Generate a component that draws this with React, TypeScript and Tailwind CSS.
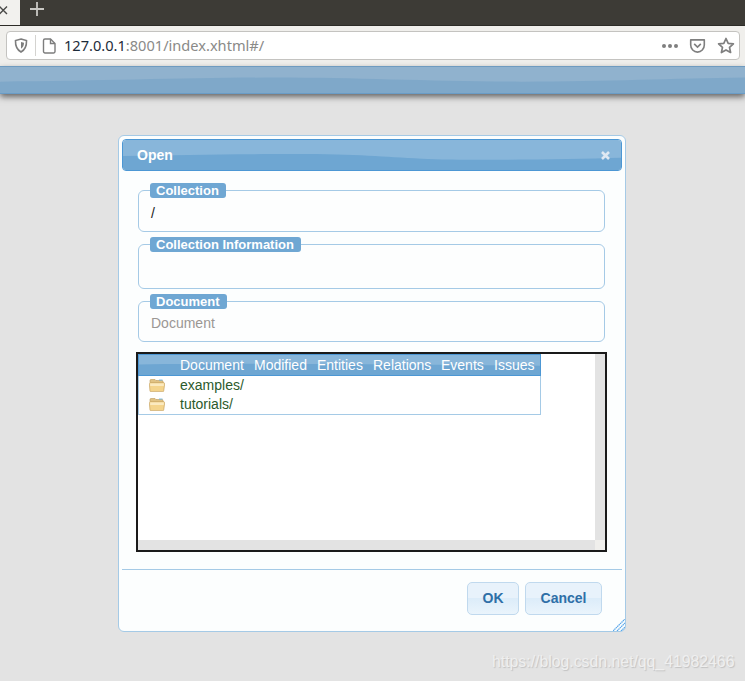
import React from "react";

const sans = { fontFamily: '"Liberation Sans", Arial, sans-serif' };

function Wave({ top, path, color }: { top: string; path: string; color: string }) {
  return (
    <svg className="absolute inset-0 w-full h-full" viewBox="0 0 500 32" preserveAspectRatio="none" aria-hidden>
      <rect width="500" height="32" fill={top} />
      <path d={path} fill={color} />
    </svg>
  );
}

function Field({ legend, h, mt, children, legendW }: { legend: string; h: string; mt: string; legendW: string; children?: React.ReactNode }) {
  return (
    <div className={`relative ${h} ${mt} border border-[#a5cae6] rounded-[6px] bg-[#fdfefe]`}>
      <div className={`absolute left-[11px] top-[-8px] h-[15px] ${legendW} bg-[#6fa7d3] rounded-[3px] text-white font-bold text-[13px] leading-[15px] pl-[6px] whitespace-nowrap`}>
        {legend}
      </div>
      {children}
    </div>
  );
}

function Folder() {
  return (
    <svg width="16" height="13" viewBox="0 0 16 13" aria-hidden>
      <path d="M1 4V1.500Q1 .5 2 .5h4l1 1h6q1 0 1 1V4z" fill="#e0c283" stroke="#bd9a5c" strokeWidth="0.6" />
      <rect x="10" y="0.6" width="3.500" height="0.900" fill="#6ab4e4" />
      <path d="M1.500 3.600h13.500l.7 1.200-1 7.300q-.1 .5-.8 .5H1.800q-.7 0-.8-.5L.3 4.800z" fill="#f4d48c" stroke="#c9a565" strokeWidth="0.7" />
      <rect x="1.200" y="4.400" width="13.600" height="2.600" fill="#fbeac0" />
    </svg>
  );
}

export default function App() {
  const cols: [string, string][] = [
    ["Document", "w-[74px]"],
    ["Modified", "w-[63px]"],
    ["Entities", "w-[56px]"],
    ["Relations", "w-[68px]"],
    ["Events", "w-[53px]"],
    ["Issues", "w-[47px]"],
  ];
  return (
    <div className="relative w-[745px] h-[681px] overflow-hidden bg-[#e3e3e3] text-[14px]" style={sans}>
      {/* tab strip */}
      <div className="flex h-[26px] bg-[#3d3b36] border-b border-[#2c2b27]">
        <div className="w-[20px] h-full bg-[#f2f1ee] flex items-start">
          <svg width="9" height="9" viewBox="0 0 9 9" className="mt-[6px] ml-[-1px]" aria-hidden>
            <path d="M0.5 0.5L8 8M8 0.5L0.5 8" stroke="#4a4a48" strokeWidth="1.4" />
          </svg>
        </div>
        <svg width="16" height="16" viewBox="0 0 16 16" className="ml-[9px] mt-[1px]" aria-hidden>
          <path d="M8 1v14M1 8h14" stroke="#c9c8c4" strokeWidth="1.8" />
        </svg>
      </div>
      {/* nav bar */}
      <div className="h-[40px] bg-[#f0efec] pl-[6px] pr-[5px] pt-[5px]">
        <div className="flex items-center h-[29px] bg-white border border-[#c4c3c0] rounded-[4px]">
          <svg width="14" height="15" viewBox="0 0 14 15" className="ml-[7px]" aria-hidden>
            <path d="M7 1l5.500 1.500c.2 5-1 9-5.500 11.500C2.500 11.500 1.300 7.500 1.500 2.500z" fill="none" stroke="#7d7d7d" strokeWidth="1.600" />
            <path d="M7 4l3 .8c0 2.500-.8 4.500-3 6z" fill="#7d7d7d" />
          </svg>
          <div className="w-px h-[21px] bg-[#d4d3d0] ml-[7px]" />
          <svg width="15" height="16" viewBox="0 0 14 16" className="ml-[6px]" aria-hidden>
            <path d="M2.500 1h5.500l4.500 4.500v8a1.500 1.500 0 0 1-1.500 1.500h-8.500a1.500 1.500 0 0 1-1.500-1.500v-11a1.500 1.500 0 0 1 1.500-1.500z" fill="none" stroke="#7d7d7d" strokeWidth="1.400" />
            <path d="M8 1v4.500h4.500" fill="none" stroke="#7d7d7d" strokeWidth="1.400" />
          </svg>
          <span className="ml-[7px] text-[14.600px] whitespace-nowrap" style={{ fontFamily: '"Noto Sans", sans-serif' }}>
            <span className="text-[#1d2b3a]">127.0.0.1</span>
            <span className="text-[#8a8a88]">:8001/index.xhtml#/</span>
          </span>
          <div className="flex-1" />
          <div className="flex gap-[2px] items-center">
            <span className="w-[4px] h-[4px] rounded-full bg-[#7f7f7f]" />
            <span className="w-[4px] h-[4px] rounded-full bg-[#7f7f7f]" />
            <span className="w-[4px] h-[4px] rounded-full bg-[#7f7f7f]" />
          </div>
          <svg width="17" height="16" viewBox="0 0 18 16" className="ml-[11px]" aria-hidden>
            <path d="M1.800 1.500h14.400v5.500a7.200 7.500 0 0 1-14.400 0z" fill="none" stroke="#7f7f7f" strokeWidth="1.700" strokeLinejoin="round" />
            <path d="M5.500 5.800L9 9.200l3.500-3.400" fill="none" stroke="#7f7f7f" strokeWidth="1.700" />
          </svg>
          <svg width="18" height="17" viewBox="0 0 18 17" className="ml-[11px] mr-[4px]" aria-hidden>
            <path d="M9 1.500l2.200 4.800 5.200.6-3.900 3.500 1.100 5.100L9 12.900l-4.600 2.600 1.100-5.100L1.600 6.900l5.200-.6z" fill="none" stroke="#7f7f7f" strokeWidth="1.700" strokeLinejoin="round" />
          </svg>
        </div>
      </div>
      {/* app header */}
      <div className="relative h-[28px] border-y border-t-[#6f9bc0] border-b-[#6a9cc6] shadow-[0_3px_6px_rgba(50,50,50,0.7)] overflow-hidden">
        <Wave top="#90b2ce" path="M0 18C70 17 130 13 185 13S290 18 350 18S450 14 500 13V32H0z" color="#7fa8c9" />
      </div>

      {/* dialog */}
      <div className="relative ml-[118px] mt-[41px] w-[508px] h-[497px] bg-[#fcfefe] border border-[#a5cae6] rounded-[6px] px-[3px] pt-[3px]">
        <div className="relative h-[32px] border border-[#4c97d4] rounded-[4px] overflow-hidden flex items-center pl-[14px] justify-between">
          <Wave top="#88b6da" path="M0 17C60 16 100 15 170 15S260 18 300 20S440 21 500 19V32H0z" color="#6ea6d2" />
          <span className="relative text-white font-bold text-[14px]">Open</span>
          <svg width="9" height="9" viewBox="0 0 9 9" className="relative mr-[11px]" aria-hidden>
            <path d="M1 1l7 7M8 1L1 8" stroke="#dfe8f2" strokeWidth="2.600" />
          </svg>
        </div>

        <div className="ml-[16px] mr-[17px] pt-[1px]">
          <Field legend="Collection" legendW="w-[76px]" h="h-[42px]" mt="mt-[18px]">
            <div className="pl-[12px] pt-[14px] text-[14px] leading-[16px] text-[#222]">/</div>
          </Field>
          <Field legend="Collection Information" legendW="w-[151px]" h="h-[45px]" mt="mt-[12px]" />
          <Field legend="Document" legendW="w-[77px]" h="h-[41px]" mt="mt-[12px]">
            <div className="pl-[12px] pt-[13px] text-[14px] leading-[16px] text-[#9b9794]">Document</div>
          </Field>
        </div>

        {/* file browser */}
        <div className="relative ml-[14px] mt-[10px] w-[471px] h-[200px] border-2 border-[#1a1a1a] bg-white">
          <div className="w-[403px]">
            <div className="relative flex h-[22px] items-center border border-[#4c97d4] overflow-hidden text-white">
              <Wave top="#88b6da" path="M0 15C120 13 250 14 500 17V32H0z" color="#6ea6d2" />
              <div className="relative flex pl-[41px]">
                {cols.map(([t, w]) => (
                  <span key={t} className={`${w} text-[14px] whitespace-nowrap`}>{t}</span>
                ))}
              </div>
            </div>
            <div className="border border-t-0 border-[#a5cae6] h-[39px]">
              {["examples/", "tutorials/"].map((n) => (
                <div key={n} className="flex items-center h-[19px] pl-[10px] text-[14px] text-[#2c5a2c]">
                  <Folder />
                  <span className="ml-[15px]">{n}</span>
                </div>
              ))}
            </div>
          </div>
          <div className="absolute right-0 top-0 w-[10px] h-[186px] bg-[#e3e3e3]" />
          <div className="absolute left-0 bottom-0 w-[457px] h-[10px] bg-[#e3e3e3]" />
          <div className="absolute right-0 bottom-0 w-[10px] h-[10px] bg-[#f0efec]" />
        </div>

        <div className="h-px bg-[#a5cae6] mt-[17px]" />
        <div className="flex justify-end gap-[6px] mt-[12px] pr-[20px]">
          <button className="w-[52px] h-[33px] border border-[#c0d9ee] rounded-[5px] bg-[linear-gradient(#e8f2fb_50%,#dcecf9_50%,#eaf4fc)] text-[#2e6fa7] font-bold text-[14px]">OK</button>
          <button className="w-[77px] h-[33px] border border-[#c0d9ee] rounded-[5px] bg-[linear-gradient(#e8f2fb_50%,#dcecf9_50%,#eaf4fc)] text-[#2e6fa7] font-bold text-[14px]">Cancel</button>
        </div>
        <svg width="12" height="12" viewBox="0 0 12 12" className="absolute right-0 bottom-0" aria-hidden>
          <path d="M0 12L12 0M4 12L12 4M8 12L12 8" stroke="#58a6ea" strokeWidth="1.200" strokeDasharray="1.500 0.500" />
        </svg>
      </div>

      <div className="absolute left-[492px] top-[652px] text-[15.800px] leading-[20px] text-[#efefef] whitespace-nowrap [text-shadow:1px_1px_1px_rgba(185,185,185,0.8)]">
        https://blog.csdn.net/qq_41982466
      </div>
    </div>
  );
}
